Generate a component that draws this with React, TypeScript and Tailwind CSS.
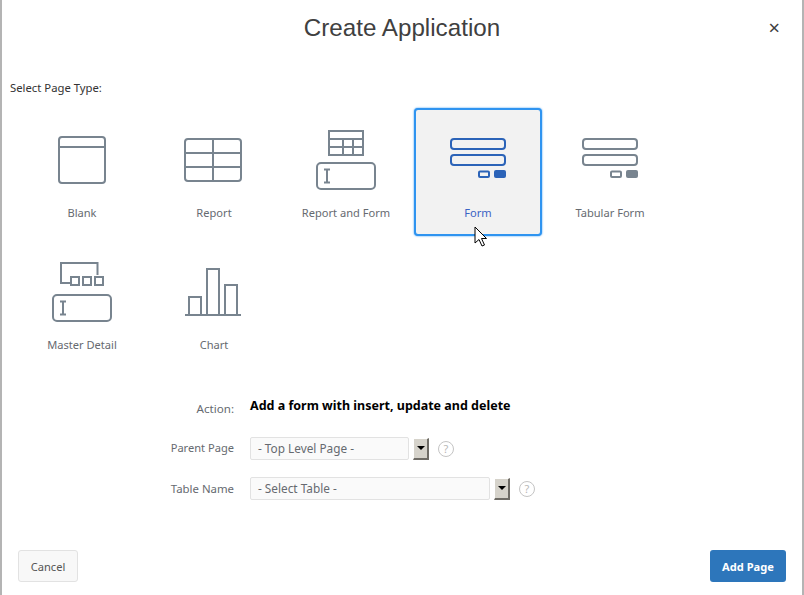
import React from 'react';

const grayIcon = '#78848f';
const blueIcon = '#2b63b8';

type IconProps = { color: string };

const BlankIcon: React.FC<IconProps> = ({ color }) => (
  <svg viewBox="20 110 124 86" className="block h-[86px] w-[124px]" fill="none" stroke={color} strokeWidth="2">
    <rect x="59" y="137" width="46" height="46" rx="3" />
    <path d="M59 147h46" />
  </svg>
);

const ReportIcon: React.FC<IconProps> = ({ color }) => (
  <svg viewBox="152 110 124 86" className="block h-[86px] w-[124px]" fill="none" stroke={color} strokeWidth="2">
    <rect x="185" y="139" width="56" height="42" rx="3" />
    <path d="M185 153h56M185 167h56M213 139v42" />
  </svg>
);

const ReportFormIcon: React.FC<IconProps> = ({ color }) => (
  <svg viewBox="284 110 124 86" className="block h-[86px] w-[124px]" fill="none" stroke={color} strokeWidth="2">
    <rect x="329" y="131" width="34" height="24" />
    <path d="M329 139h34M329 147h34M343 139v16M353 139v16" />
    <rect x="317" y="163" width="58" height="26" rx="4" />
    <path d="M327 170v12M324 169.500h6M324 182.500h6" />
  </svg>
);

const FormIcon: React.FC<IconProps> = ({ color }) => (
  <svg viewBox="416 110 124 86" className="block h-[86px] w-[124px]" fill="none" stroke={color} strokeWidth="2">
    <rect x="451" y="139" width="54" height="10" rx="3" />
    <rect x="451" y="155" width="54" height="10" rx="3" />
    <rect x="479" y="171.500" width="10" height="5.500" rx="1" />
    <rect x="494" y="170" width="12" height="8" rx="2" fill={color} stroke="none" />
  </svg>
);

const MasterIcon: React.FC<IconProps> = ({ color }) => (
  <svg viewBox="20 242 124 86" className="block h-[86px] w-[124px]" fill="none" stroke={color} strokeWidth="2">
    <path d="M70 283H61V263H97.500V275" />
    <rect x="71" y="277" width="8" height="8" />
    <rect x="83" y="277" width="8" height="8" />
    <rect x="95" y="277" width="8" height="8" />
    <rect x="53" y="295" width="58" height="26" rx="4" />
    <path d="M63 302v12M60 301.500h6M60 314.500h6" />
  </svg>
);

const ChartIcon: React.FC<IconProps> = ({ color }) => (
  <svg viewBox="152 242 124 86" className="block h-[86px] w-[124px]" fill="none" stroke={color} strokeWidth="2">
    <path d="M185 315h56" />
    <path d="M189 315v-18h12v18M207 315v-46h12v46M225 315v-30h12v30" />
  </svg>
);

const cards = [
  { label: 'Blank', icon: <BlankIcon color={grayIcon} /> },
  { label: 'Report', icon: <ReportIcon color={grayIcon} /> },
  { label: 'Report and Form', icon: <ReportFormIcon color={grayIcon} /> },
  { label: 'Form', icon: <FormIcon color={blueIcon} />, selected: true },
  { label: 'Tabular Form', icon: <FormIcon color={grayIcon} /> },
  { label: 'Master Detail', icon: <MasterIcon color={grayIcon} /> },
  { label: 'Chart', icon: <ChartIcon color={grayIcon} /> },
];

const HelpIcon: React.FC = () => (
  <span className="ml-[9px] flex h-4 w-4 items-center justify-center rounded-full border border-[#c4c4c4] text-[11px] leading-none text-[#b8b8b8]">
    ?
  </span>
);

const SelectField: React.FC<{ text: string; width: string }> = ({ text, width }) => (
  <div className="flex items-center">
    <div className={`flex h-[23px] items-center rounded-[2px] border border-[#e2e2e2] bg-[#fafafa] pl-[7px] text-[11.8px] ${width}`}>
      {text}
    </div>
    <span className="ml-1 flex h-[22px] w-4 items-center justify-center border-t border-r-2 border-b-2 border-l border-t-white border-r-[#6f6c66] border-b-[#6f6c66] border-l-white bg-[#d6d3cb]">
      <span className="h-0 w-0 border-x-[4px] border-t-[4px] border-x-transparent border-t-black" />
    </span>
    <HelpIcon />
  </div>
);

const App: React.FC = () => {
  return (
    <div className="relative flex h-[595px] w-[804px] flex-col overflow-hidden border-x-2 border-x-[#b4b4b4] bg-white font-['Noto_Sans',sans-serif] text-[11.1px] text-[#666a70]">
      <header className="grid h-14 grid-cols-[1fr_auto_1fr] items-center">
        <span />
        <h1 className="font-['Liberation_Sans',sans-serif] text-[24.2px] text-[#404040]">Create Application</h1>
        <button className="justify-self-end pr-[22px] text-xl leading-none text-[#404040]">×</button>
      </header>

      <p className="mt-6 ml-2 text-[11.3px] leading-4 text-[#333]">Select Page Type:</p>

      <div className="mt-3 grid grid-cols-[repeat(5,128px)] gap-1 px-4">
        {cards.map((card) => (
          <div
            key={card.label}
            className={
              card.selected
                ? 'h-[128px] rounded-[4px] border-2 border-[#2f94f0] bg-[#f2f2f2] text-[#3b63c4] shadow-[0_0_2px_#2f94f0]'
                : 'h-[128px] rounded-[4px] border-2 border-transparent'
            }
          >
            {card.icon}
            <div className="mt-[9px] text-center leading-4">{card.label}</div>
          </div>
        ))}
      </div>

      <div className="mt-[30px] grid grid-cols-[232px_1fr] items-center gap-x-4 gap-y-[17px]">
        <div className="mb-[3px] self-start pt-[3px] text-right text-[11.6px] leading-4">Action:</div>
        <div className="mb-[3px] self-start text-[12.5px] leading-4 font-bold text-black">
          Add a form with insert, update and delete
        </div>
        <div className="text-right">Parent Page</div>
        <SelectField text="- Top Level Page -" width="w-[159px]" />
        <div className="text-right text-[11.4px]">Table Name</div>
        <SelectField text="- Select Table -" width="w-[240px]" />
      </div>

      <footer className="mt-auto mb-[13px] flex items-center justify-between px-4">
        <button className="h-8 w-[60px] rounded-[3px] border border-[#e2e2e2] bg-[#f8f8f8] pt-[2px] text-[#555]">Cancel</button>
        <button className="h-8 w-[76px] rounded-[3px] bg-[#2d76bb] pt-[2px] font-bold text-white">Add Page</button>
      </footer>

      {/* mouse pointer */}
      <svg className="absolute top-[226px] left-[472px] h-[22px] w-[14px]" viewBox="0 0 14 22">
        <path d="M1 1v16l4-3.500 3 6.500 2.500-1-3-6.500H12.500z" fill="#fff" stroke="#000" strokeWidth="1" />
      </svg>
    </div>
  );
};

export default App;
